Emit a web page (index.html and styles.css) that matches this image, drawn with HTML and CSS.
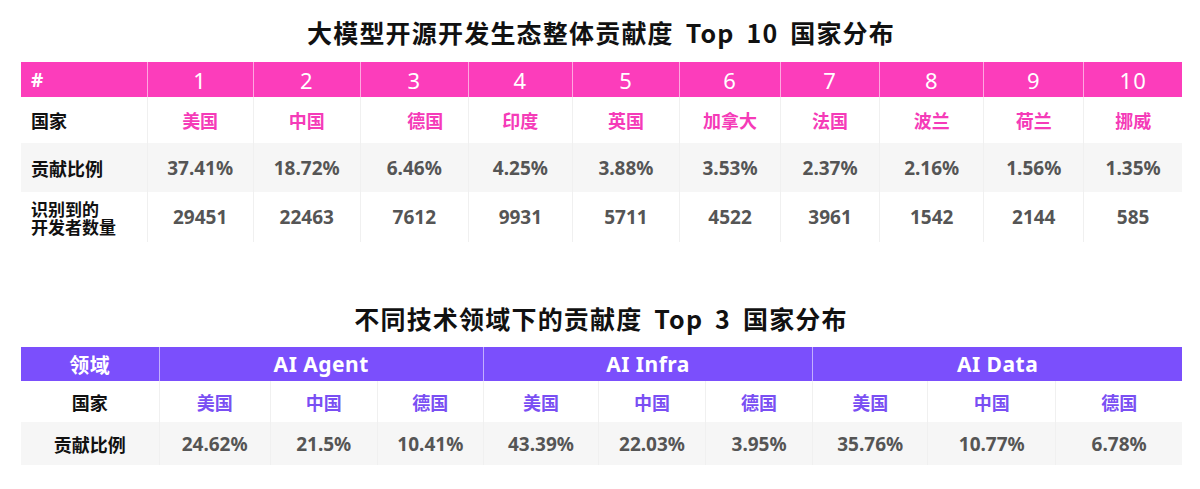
FILE: index.html
```html
<!DOCTYPE html>
<html lang="zh">
<head>
<meta charset="utf-8">
<link rel="stylesheet" href="styles.css">
</head>
<body>
<div class="page">
  <h2 class="title t1">大模型开源开发生态整体贡献度 Top 10 国家分布</h2>
  <table class="tbl pink">
    <colgroup>
      <col style="width:126px"><col style="width:106px"><col style="width:107px"><col style="width:108px"><col style="width:104px"><col style="width:107px"><col style="width:101px"><col style="width:99px"><col style="width:104px"><col style="width:100px"><col style="width:98px">
    </colgroup>
    <tr class="head">
      <th class="lbl">#</th><th>1</th><th>2</th><th>3</th><th>4</th><th>5</th><th>6</th><th>7</th><th>8</th><th>9</th><th>10</th>
    </tr>
    <tr class="r-country r1">
      <td class="lbl">国家</td><td>美国</td><td>中国</td><td class="shift">德国</td><td>印度</td><td>英国</td><td>加拿大</td><td>法国</td><td>波兰</td><td>荷兰</td><td>挪威</td>
    </tr>
    <tr class="r-num grey r2">
      <td class="lbl">贡献比例</td><td>37.41%</td><td>18.72%</td><td>6.46%</td><td>4.25%</td><td>3.88%</td><td>3.53%</td><td>2.37%</td><td>2.16%</td><td>1.56%</td><td>1.35%</td>
    </tr>
    <tr class="r-num r3">
      <td class="lbl two"><span class="ln">识别到的</span><span class="ln">开发者数量</span></td><td>29451</td><td>22463</td><td>7612</td><td>9931</td><td>5711</td><td>4522</td><td>3961</td><td>1542</td><td>2144</td><td>585</td>
    </tr>
  </table>

  <h2 class="title t2">不同技术领域下的贡献度 Top 3 国家分布</h2>
  <table class="tbl purple">
    <colgroup>
      <col style="width:138px"><col style="width:111px"><col style="width:107px"><col style="width:106px"><col style="width:115px"><col style="width:107px"><col style="width:107px"><col style="width:115px"><col style="width:128px"><col style="width:126px">
    </colgroup>
    <tr class="head">
      <th class="lbl c">领域</th><th colspan="3">AI Agent</th><th colspan="3">AI Infra</th><th colspan="3">AI Data</th>
    </tr>
    <tr class="r-country q1">
      <td class="lbl c">国家</td><td>美国</td><td>中国</td><td>德国</td><td>美国</td><td>中国</td><td>德国</td><td>美国</td><td>中国</td><td>德国</td>
    </tr>
    <tr class="r-num grey q2">
      <td class="lbl c">贡献比例</td><td>24.62%</td><td>21.5%</td><td>10.41%</td><td>43.39%</td><td>22.03%</td><td>3.95%</td><td>35.76%</td><td>10.77%</td><td>6.78%</td>
    </tr>
  </table>
</div>
</body>
</html>
```

FILE: styles.css
```css
* { box-sizing: border-box; }
html, body { margin: 0; padding: 0; background: #fff; }
body {
  font-family: "Noto Sans CJK SC", "Noto Sans", sans-serif;
  color: #1a1a1a;
}
.page {
  width: 1200px;
  padding: 15px 0 0 21px;
}
.title {
  margin: 0;
  width: 1160px;
  text-align: center;
  font-size: 25px;
  line-height: 34px;
  font-weight: 700;
  color: #111;
  letter-spacing: 1.2px;
  word-spacing: 5px;
}
.t1 { margin-bottom: 13px; }
.t2 { margin-top: 59px; margin-bottom: 12px; }

.tbl {
  border-collapse: collapse;
  table-layout: fixed;
  width: 1161px;
}
.tbl th, .tbl td {
  padding: 0;
  text-align: center;
  vertical-align: middle;
  white-space: nowrap;
}
.tbl td { border-left: 1px solid #f0f0f0; }
.tbl td:first-child { border-left: none; }
.tbl .head th {
  color: #fff;
  font-family: "Noto Sans", "Noto Sans CJK SC", sans-serif;
  font-weight: 400;
  font-size: 22px;
  letter-spacing: 1px;
  border-left: 1px solid rgba(255,255,255,0.55);
}
.tbl .head th:first-child { border-left: none; }
.pink .head { background: #fc3dbb; height: 35px; }
.purple .head { background: #7b4ffc; height: 34px; }
.purple .head th { font-weight: 700; font-size: 21px; letter-spacing: 0.5px; }
.purple .head th.lbl { font-family: "Noto Sans CJK SC", sans-serif; font-size: 20px; }

.tbl .lbl {
  text-align: left;
  padding-left: 10px;
  font-weight: 700;
  color: #111;
  font-size: 18px;
}
.tbl .lbl.c { text-align: center; padding-left: 0; }
.tbl .head .lbl { color: #fff; font-weight: 700; font-size: 19px; }
.tbl .lbl.two { padding-top: 1px; }
.tbl .r-num td.lbl.two { font-size: 17px; }
.ln { display: block; line-height: 18px; }

.r-country td { font-weight: 700; font-size: 18px; }
.pink .r-country td { color: #f53bb8; }
.purple .r-country td { color: #7a4ff3; }
.tbl .r-country td.lbl { color: #111; }
.r-country td.shift { padding-left: 22px; }

.r-num td {
  font-family: "Noto Sans", "Open Sans", sans-serif;
  font-weight: 700;
  font-size: 19px;
  color: #555;
}
.tbl .r-num td.lbl { font-family: "Noto Sans CJK SC", sans-serif; color: #111; font-size: 18px; }
.grey { background: #f6f6f6; }

.r1 { height: 46px; }
.r2 { height: 49px; }
.r3 { height: 50px; }
.q1 { height: 41px; }
.q2 { height: 43px; }
```
